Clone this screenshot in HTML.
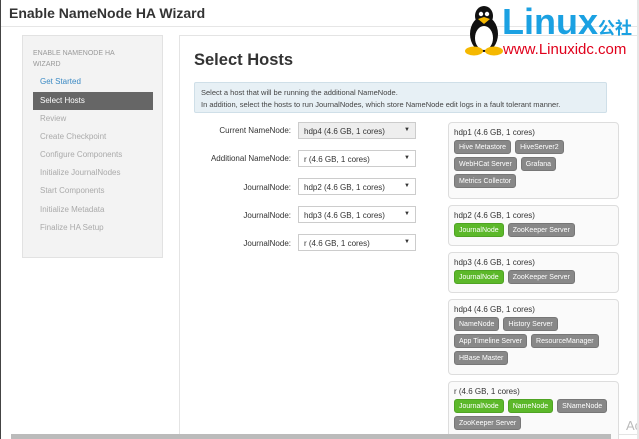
<!DOCTYPE html><html><head><style>
*{box-sizing:border-box;margin:0;padding:0}
html{width:639px;height:439px;overflow:hidden}
body{width:639px;height:439px;overflow:hidden;background:#fff;font-family:"Liberation Sans",Arial,sans-serif;position:relative;border-left:1px solid #444}
.a{position:absolute}
.h{left:8px;top:5px;font-size:14px;font-weight:bold;color:#333}
.side{left:21px;top:35px;width:141px;height:223px;background:#f3f3f3;border:1px solid #e2e2e2}
.si{position:absolute;left:17px;font-size:8px;color:#aaa}
.main{left:178px;top:35px;width:470px;height:400px;border:1px solid #e4e4e4}
.lab{position:absolute;right:348px;font-size:8px;color:#333;text-align:right}
.sel{position:absolute;left:297px;width:118px;height:17px;border:1px solid #ccc;font-size:8px;color:#333;padding:4px 5px;background:#fff}
.sel:after{content:"▼";position:absolute;right:5px;top:4px;font-size:6px}
.box{position:absolute;left:447px;width:171px;border:1px solid #ddd;border-radius:4px;background:#fafafa;padding:5px 5px 0 5px;font-size:8px;color:#333}
.b{display:inline-block;height:14px;line-height:14px;padding:0 4px;border-radius:3px;background:#888;color:#fff;font-size:7px;margin:0 4px 3px 0;border:1px solid #777}
.g{background:#5cb82a;border-color:#4fa324}
.t{margin-bottom:3px}
</style></head><body>
<div class="a h">Enable NameNode HA Wizard</div>
<div class="a" style="left:0;top:26px;width:639px;height:1px;background:#e6e6e6"></div>
<div class="a side">
<div class="si" style="left:10px;top:12px;font-size:7px;line-height:11px;color:#999">ENABLE NAMENODE HA<br>WIZARD</div>
<div class="si" style="top:41px;color:#3b8ac4">Get Started</div>
<div style="position:absolute;left:10px;top:56px;width:120px;height:18px;background:#666"></div>
<div class="si" style="top:60px;color:#fff">Select Hosts</div>
<div class="si" style="top:78px">Review</div>
<div class="si" style="top:96px">Create Checkpoint</div>
<div class="si" style="top:114px">Configure Components</div>
<div class="si" style="top:132px">Initialize JournalNodes</div>
<div class="si" style="top:150px">Start Components</div>
<div class="si" style="top:169px">Initialize Metadata</div>
<div class="si" style="top:187px">Finalize HA Setup</div>
</div>
<div class="a main"></div>
<div class="a" style="left:193px;top:51px;font-size:16.5px;font-weight:bold;color:#333">Select Hosts</div>
<div class="a" style="left:193px;top:82px;width:413px;height:31px;background:#e7f0f5;border:1px solid #cfdfe8;border-radius:2px;font-size:7.5px;color:#444;padding:4px 6px;line-height:12px">Select a host that will be running the additional NameNode.<br>In addition, select the hosts to run JournalNodes, which store NameNode edit logs in a fault tolerant manner.</div>
<div class="lab" style="top:126px">Current NameNode:</div><div class="sel" style="top:122px;background:#eee">hdp4 (4.6 GB, 1 cores)</div>
<div class="lab" style="top:154px">Additional NameNode:</div><div class="sel" style="top:150px">r (4.6 GB, 1 cores)</div>
<div class="lab" style="top:183px">JournalNode:</div><div class="sel" style="top:178px">hdp2 (4.6 GB, 1 cores)</div>
<div class="lab" style="top:211px">JournalNode:</div><div class="sel" style="top:206px">hdp3 (4.6 GB, 1 cores)</div>
<div class="lab" style="top:239px">JournalNode:</div><div class="sel" style="top:234px">r (4.6 GB, 1 cores)</div>
<div class="box" style="top:122px;height:77px"><div class="t">hdp1 (4.6 GB, 1 cores)</div><span class="b">Hive Metastore</span><span class="b">HiveServer2</span><br><span class="b">WebHCat Server</span><span class="b">Grafana</span><br><span class="b">Metrics Collector</span></div>
<div class="box" style="top:205px;height:41px"><div class="t">hdp2 (4.6 GB, 1 cores)</div><span class="b g">JournalNode</span><span class="b">ZooKeeper Server</span></div>
<div class="box" style="top:252px;height:41px"><div class="t">hdp3 (4.6 GB, 1 cores)</div><span class="b g">JournalNode</span><span class="b">ZooKeeper Server</span></div>
<div class="box" style="top:299px;height:76px"><div class="t">hdp4 (4.6 GB, 1 cores)</div><span class="b">NameNode</span><span class="b">History Server</span><br><span class="b">App Timeline Server</span><span class="b">ResourceManager</span><br><span class="b">HBase Master</span></div>
<div class="box" style="top:381px;height:70px"><div class="t">r (4.6 GB, 1 cores)</div><span class="b g">JournalNode</span><span class="b g">NameNode</span><span class="b">SNameNode</span><br><span class="b">ZooKeeper Server</span></div>
<div class="a" style="left:625px;top:418px;font-size:13px;color:#bbb">Ac</div>
<div class="a" style="left:10px;top:434px;width:600px;height:5px;background:#bbb"></div>
<div class="a" style="left:636px;top:0;width:3px;height:439px;background:#e6e6e6"></div>
<svg class="a" style="left:464px;top:4px" width="38" height="52" viewBox="0 0 38 52">
<ellipse cx="19" cy="30" rx="14" ry="18" fill="#111"/><ellipse cx="19" cy="34" rx="9" ry="12" fill="#fff"/>
<ellipse cx="19" cy="12" rx="9" ry="10" fill="#111"/><circle cx="16" cy="10" r="2.2" fill="#fff"/><circle cx="22" cy="10" r="2.2" fill="#fff"/>
<path d="M13 15 L19 13 L25 15 L19 20Z" fill="#f5b800"/>
<ellipse cx="9" cy="47" rx="9" ry="4.5" fill="#f5b800"/><ellipse cx="29" cy="47" rx="9" ry="4.5" fill="#f5b800"/></svg>
<div class="a" style="left:501px;top:2px;font-size:36px;font-weight:bold;color:#1ba1e2;line-height:40px;white-space:nowrap">Linux<span style="font-size:17px;font-family:'Noto Sans CJK SC',sans-serif;color:#1ba1e2">公社</span></div>
<div class="a" style="left:502px;top:41px;font-size:15px;color:#e0001b;white-space:nowrap">www.Linuxidc.com</div>
</body></html>
